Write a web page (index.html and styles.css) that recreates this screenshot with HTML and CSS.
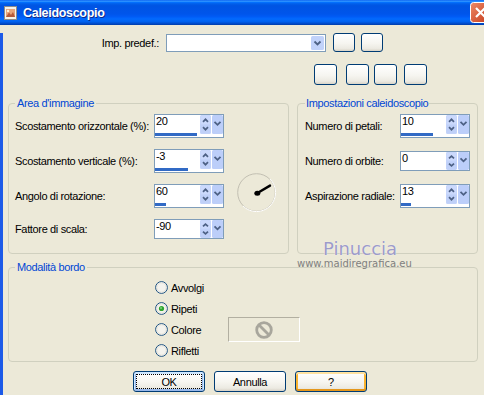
FILE: index.html
```html
<!DOCTYPE html>
<html lang="it">
<head>
<meta charset="utf-8">
<title>Caleidoscopio</title>
<link rel="stylesheet" href="styles.css">
</head>
<body>
<svg class="defs" width="0" height="0" aria-hidden="true">
  <symbol id="ud" viewBox="0 0 11 19">
    <rect x="0" y="0" width="11" height="19" rx="1.5" fill="#C4D4FA"/>
    <rect x="0.5" y="0.5" width="10" height="8.5" rx="1.5" fill="#CBD9FC"/>
    <rect x="0.5" y="10" width="10" height="8.5" rx="1.5" fill="#BFD0F8"/>
    <path d="M3 6.8 L5.5 4.3 L8 6.8" fill="none" stroke="#4D6185" stroke-width="1.7"/>
    <path d="M3 12.2 L5.5 14.7 L8 12.2" fill="none" stroke="#4D6185" stroke-width="1.7"/>
  </symbol>
  <symbol id="dd" viewBox="0 0 11 19">
    <rect x="0" y="0" width="11" height="19" rx="1.5" fill="#BCCEF9"/>
    <path d="M2.5 6.8 L5.5 9.8 L8.5 6.8" fill="none" stroke="#4D6185" stroke-width="1.8"/>
  </symbol>
  <symbol id="radio" viewBox="0 0 13 13">
    <circle cx="6.5" cy="6.5" r="5.9" fill="#F4F3EE" stroke="#1C5180" stroke-width="1"/>
    <circle cx="6.5" cy="6.5" r="4.6" fill="none" stroke="#E2E0D6" stroke-width="0.8"/>
  </symbol>
</svg>
<div class="window">
  <div class="titlebar">
    <svg class="app-icon" width="15" height="16" viewBox="0 0 15 16">
      <rect x="1.5" y="1.5" width="12" height="13" fill="#F6F3EA" stroke="#8C8C8C"/>
      <rect x="3" y="4" width="9" height="8" fill="#E9A57A"/>
      <path d="M3 12 L6 7.5 L8 10 L10 7 L12 12 Z" fill="#B65A3A"/>
      <circle cx="5" cy="6" r="1.2" fill="#FFF3D6"/>
    </svg>
    <span class="title">Caleidoscopio</span>
    <div class="close">
      <svg width="21" height="21" viewBox="0 0 21 21">
        <defs>
          <linearGradient id="cg" x1="0" y1="0" x2="1" y2="1">
            <stop offset="0" stop-color="#EE8A67"/>
            <stop offset="1" stop-color="#C43A1B"/>
          </linearGradient>
        </defs>
        <rect x="0.5" y="0.5" width="20" height="20" rx="3" fill="url(#cg)" stroke="#FFFFFF"/>
        <path d="M6 6 L15 15 M15 6 L6 15" stroke="#FFFFFF" stroke-width="2.2"/>
      </svg>
    </div>
  </div>
  <div class="client">
    <div class="preset-row">
      <span class="preset-label">Imp. predef.:</span>
      <div class="combo">
        <svg class="combo-btn" width="13" height="14" viewBox="0 0 13 14">
          <rect x="0" y="0" width="13" height="14" rx="1.5" fill="#C1D2FA"/>
          <path d="M3.5 5.5 L6.5 8.5 L9.5 5.5" fill="none" stroke="#4D6185" stroke-width="1.8"/>
        </svg>
      </div>
      <button class="sq sq-a"></button>
      <button class="sq sq-b"></button>
    </div>
    <div class="tool-row">
      <button class="tb"></button>
      <button class="tb tb-2"></button>
      <button class="tb tb-3"></button>
      <button class="tb tb-4"></button>
    </div>
    <div class="groups">
      <fieldset class="group group-area">
        <legend>Area d'immagine</legend>
        <div class="area-grid">
          <span class="lbl">Scostamento orizzontale (%):</span>
          <div class="spin">
            <div class="spin-field"><span class="spin-val">20</span><span class="spin-track" style="width:42px"></span></div>
            <svg class="spin-ud"><use href="#ud"/></svg>
            <svg class="spin-dd"><use href="#dd"/></svg>
          </div>
          <span class="lbl">Scostamento verticale (%):</span>
          <div class="spin">
            <div class="spin-field"><span class="spin-val">-3</span><span class="spin-track" style="width:33px"></span></div>
            <svg class="spin-ud"><use href="#ud"/></svg>
            <svg class="spin-dd"><use href="#dd"/></svg>
          </div>
          <span class="lbl">Angolo di rotazione:</span>
          <div class="spin">
            <div class="spin-field"><span class="spin-val">60</span><span class="spin-track" style="width:11px"></span></div>
            <svg class="spin-ud"><use href="#ud"/></svg>
            <svg class="spin-dd"><use href="#dd"/></svg>
          </div>
          <span class="lbl">Fattore di scala:</span>
          <div class="spin spin-plain">
            <div class="spin-field"><span class="spin-val">-90</span></div>
            <svg class="spin-ud" viewBox="0 0 11 19" preserveAspectRatio="none"><use href="#ud"/></svg>
            <svg class="spin-dd" viewBox="0 0 11 19" preserveAspectRatio="none"><use href="#dd"/></svg>
          </div>
          <svg class="dial" width="39" height="39" viewBox="0 0 39 39">
            <circle cx="19.5" cy="19.5" r="18.8" fill="none" stroke="#C2BFB2" stroke-width="1"/>
            <path d="M33 6 A18 18 0 0 1 6 33" fill="none" stroke="#FFFFFF" stroke-width="1"/>
            <path d="M20.5 20 L33 12.6" stroke="#000" stroke-width="2.4" stroke-linecap="round"/>
            <ellipse cx="20.3" cy="20.2" rx="3" ry="2.5" fill="#000"/>
          </svg>
        </div>
      </fieldset>
      <fieldset class="group group-kal">
        <legend>Impostazioni caleidoscopio</legend>
        <div class="kal-grid">
          <span class="lbl">Numero di petali:</span>
          <div class="spin">
            <div class="spin-field"><span class="spin-val">10</span><span class="spin-track" style="width:32px"></span></div>
            <svg class="spin-ud"><use href="#ud"/></svg>
            <svg class="spin-dd"><use href="#dd"/></svg>
          </div>
          <span class="lbl">Numero di orbite:</span>
          <div class="spin spin-plain">
            <div class="spin-field"><span class="spin-val">0</span></div>
            <svg class="spin-ud" viewBox="0 0 11 19" preserveAspectRatio="none"><use href="#ud"/></svg>
            <svg class="spin-dd" viewBox="0 0 11 19" preserveAspectRatio="none"><use href="#dd"/></svg>
          </div>
          <span class="lbl">Aspirazione radiale:</span>
          <div class="spin">
            <div class="spin-field"><span class="spin-val">13</span><span class="spin-track" style="width:10px"></span></div>
            <svg class="spin-ud"><use href="#ud"/></svg>
            <svg class="spin-dd"><use href="#dd"/></svg>
          </div>
        </div>
      </fieldset>
    </div>
    <div class="edge-wrap">
      <fieldset class="group group-edge">
        <legend>Modalità bordo</legend>
        <div class="edge-grid">
          <div class="radio"><svg width="13" height="13"><use href="#radio"/></svg><span>Avvolgi</span></div>
          <div class="radio"><svg width="13" height="13" viewBox="0 0 13 13"><use href="#radio"/><circle cx="6.5" cy="6.5" r="2.6" fill="#2EA52E"/><circle cx="6" cy="6" r="1" fill="#7FD67F"/></svg><span>Ripeti</span></div>
          <div class="radio"><svg width="13" height="13"><use href="#radio"/></svg><span>Colore</span></div>
          <div class="radio"><svg width="13" height="13"><use href="#radio"/></svg><span>Rifletti</span></div>
          <div class="swatch">
            <svg width="20" height="20" viewBox="0 0 20 20">
              <circle cx="10" cy="10" r="7.3" fill="none" stroke="#A8A69C" stroke-width="2.8"/>
              <path d="M5 5 L15 15" stroke="#A8A69C" stroke-width="2.8"/>
            </svg>
          </div>
        </div>
      </fieldset>
    </div>
    <div class="actions">
      <button class="btn btn-default">OK</button>
      <button class="btn">Annulla</button>
      <button class="btn btn-hot">?</button>
    </div>
  </div>
  <div class="watermark">
    <span class="wm-name">Pinuccia</span>
    <span class="wm-url">www.maidiregrafica.eu</span>
  </div>
</div>
</body>
</html>
```
FILE: styles.css
```css
* { box-sizing: border-box; }
html, body { margin: 0; padding: 0; }
body {
  width: 484px;
  height: 395px;
  overflow: hidden;
  background: #ECE9D8;
  font-family: "Liberation Sans", Arial, sans-serif;
  font-size: 11px;
  letter-spacing: -0.35px;
  color: #000;
}
.defs { display: block; width: 0; height: 0; overflow: hidden; }
.window { position: relative; width: 484px; height: 395px; overflow: hidden; }

.titlebar {
  height: 25px;
  display: flex;
  align-items: center;
  color: #fff;
  background: linear-gradient(to bottom, #0058EE 0%, #3593FF 4%, #288EFF 6%, #127DFF 8%, #036FFC 10%, #0262EE 14%, #0057E5 20%, #0054E3 24%, #0055EB 56%, #005BF5 66%, #026AFE 76%, #0062EF 86%, #0052D6 92%, #0046C0 96%, #003DA8 100%);
}
.app-icon { margin-left: 3px; flex: none; }
.title {
  margin-left: 5px;
  font-weight: bold;
  font-size: 12.5px;
  letter-spacing: -0.3px;
  text-shadow: 1px 1px 0 #0F2A8A;
}
.close { margin-left: auto; margin-right: -7px; width: 21px; height: 21px; flex: none; }
.close svg { display: block; }

.client { border-left: 3px solid #1C5AE8; height: 370px; }

.preset-row { display: flex; align-items: center; margin-top: 8px; height: 19px; }
.preset-label { width: 156px; text-align: right; white-space: nowrap; }
.combo {
  width: 160px;
  height: 18px;
  margin-left: 7px;
  border: 1px solid #7F9DB9;
  background: #fff;
  display: flex;
  justify-content: flex-end;
  align-items: center;
  padding-right: 1px;
}
.combo-btn { display: block; }

.sq, .tb {
  padding: 0;
  border: 1px solid #003C74;
  border-radius: 3px;
  background: linear-gradient(180deg, #FFFFFF 0%, #F6F5F0 55%, #ECEAE2 85%, #D9D4C8 100%);
}
.sq { width: 22px; height: 19px; }
.sq-a { margin-left: 7px; }
.sq-b { margin-left: 6px; }

.tool-row { display: flex; margin-top: 12px; padding-left: 311px; }
.tb { width: 23px; height: 21px; }
.tb-2 { margin-left: 9px; }
.tb-3 { margin-left: 5px; }
.tb-4 { margin-left: 7px; }

.groups { display: flex; gap: 8px; margin-top: 12px; padding-left: 5px; }
fieldset.group {
  margin: 0;
  border: 1px solid #D0D0BF;
  border-radius: 4px;
  min-width: 0;
  flex: none;
}
fieldset.group legend {
  color: #0046D5;
  font-size: 11px;
  line-height: 13px;
  padding: 0 2px;
}
fieldset.group-area { width: 281px; padding: 4px 0 14px 6px; }
fieldset.group-kal { width: 181px; padding: 4px 0 0 7px; }
fieldset.group-kal legend { padding: 0 1px; }

.area-grid {
  display: grid;
  grid-template-columns: 139px 70px 13px 39px;
  grid-template-rows: 24px 24px 24px 20px;
  row-gap: 11px;
}
.kal-grid {
  display: grid;
  grid-template-columns: 95px 70px;
  grid-template-rows: 24px 24px 24px;
  row-gap: 11px;
}
.lbl { grid-column: 1; align-self: center; white-space: nowrap; }

.spin {
  grid-column: 2;
  align-self: center;
  display: flex;
  align-items: flex-start;
  width: 70px;
  height: 24px;
  border: 1px solid #7F9DB9;
  background: #fff;
}
.spin-plain { height: 20px; }
.spin-field { width: 45px; height: 100%; display: flex; flex-direction: column; }
.spin-val { padding-left: 1px; line-height: 13px; }
.spin-track { display: block; height: 3px; margin-top: auto; margin-bottom: 1px; background: #316AC5; }
.spin-ud { display: block; width: 11px; height: 19px; flex: none; }
.spin-dd { display: block; width: 11px; height: 19px; margin-left: 1px; flex: none; }
.spin-plain .spin-ud, .spin-plain .spin-dd { height: 18px; }

.dial { grid-column: 4; grid-row: 2 / 5; align-self: center; margin-bottom: 3px; display: block; }

.edge-wrap { margin-top: 7px; padding-left: 5px; }
fieldset.group-edge { width: 470px; padding: 3px 0 0 6px; }
.edge-grid {
  display: grid;
  grid-template-columns: 73px 72px;
  grid-template-rows: repeat(4, 21px);
  margin-left: 140px;
}
.radio { grid-column: 1; display: flex; align-items: center; }
.radio svg { flex: none; display: block; }
.radio span { margin-left: 3px; }
.swatch {
  grid-column: 2;
  grid-row: 3;
  height: 25px;
  margin-top: -2px;
  border: 1px solid;
  border-color: #B2AFA1 #FFFFFF #FFFFFF #B2AFA1;
  display: flex;
  align-items: center;
  justify-content: center;
}

.actions { display: flex; gap: 9px; margin-top: 9px; padding-left: 130px; }
.btn {
  width: 72px;
  height: 21px;
  padding: 0;
  border: 1px solid #003C74;
  border-radius: 3px;
  background: linear-gradient(180deg, #FFFFFF 0%, #F7F6F1 50%, #ECEAE2 85%, #D8D2C6 100%);
  font-family: inherit;
  font-size: inherit;
  letter-spacing: inherit;
  color: #000;
}
.btn-default {
  box-shadow: inset 0 1px 0 1px #CEE7FF, inset 0 0 0 2px #98B8EA;
  outline: 1px dotted #000;
  outline-offset: -4px;
}
.btn-hot {
  box-shadow: inset 0 2px 0 #FFE2A0, inset 0 -2px 0 #E5971C, inset 0 0 0 2px #F8B330;
}

.watermark {
  position: absolute;
  left: 297px;
  top: 240px;
  display: flex;
  flex-direction: column;
  pointer-events: none;
  letter-spacing: 0;
}
.wm-name {
  margin-left: 26px;
  font-family: "DejaVu Sans", sans-serif;
  font-size: 18px;
  line-height: 18px;
  color: #9D9BC9;
  text-shadow: 0 0 1px #FFFFFF;
}
.wm-url {
  font-family: "DejaVu Sans", sans-serif;
  font-size: 10px;
  line-height: 12px;
  color: #7F7F7F;
}
```
